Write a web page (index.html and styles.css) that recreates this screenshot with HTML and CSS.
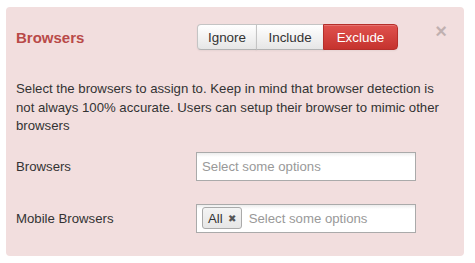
FILE: index.html
```html
<!DOCTYPE html>
<html lang="en">
<head>
    <meta charset="UTF-8">
    <meta name="viewport" content="width=device-width, initial-scale=1.0">
    <title>Browsers</title>
    <link rel="stylesheet" href="styles.css">
</head>
<body>
    <div class="rule-panel">
        <div class="rule-head">
            <h2 class="rule-title">Browsers</h2>
            <div class="btn-group">
                <button class="btn">Ignore</button>
                <button class="btn btn-include">Include</button>
                <button class="btn btn-danger">Exclude</button>
            </div>
            <button class="close">&times;</button>
        </div>

        <p class="rule-help">Select the browsers to assign to. Keep in mind that browser detection is not always 100% accurate. Users can setup their browser to mimic other browsers</p>

        <div class="field">
            <label class="field-label">Browsers</label>
            <div class="chosen">
                <span class="placeholder">Select some options</span>
            </div>
        </div>

        <div class="field">
            <label class="field-label">Mobile Browsers</label>
            <div class="chosen">
                <span class="choice">All <span class="choice-x">&#10006;</span></span>
                <span class="placeholder">Select some options</span>
            </div>
        </div>
    </div>
</body>
</html>
```

FILE: styles.css
```css
:root {
    --alert-bg: #f2dede;
    --alert-red: #b94a48;
    --text-color: #333;
}

body {
    margin: 0;
    padding: 7px 0 0 6px;
    background: #fff;
    font-family: "Liberation Sans", Arial, sans-serif;
    font-size: 13.2px;
    color: var(--text-color);
}

.rule-panel {
    width: 458px;
    box-sizing: border-box;
    background: var(--alert-bg);
    border-radius: 4px;
    padding: 17px 10px 23px 10px;
}

.rule-head {
    display: flex;
    align-items: center;
    height: 26px;
}

.rule-title {
    flex: 0 0 181px;
    margin: 0;
    font-size: 15px;
    font-weight: bold;
    color: var(--alert-red);
}

.btn-group {
    display: flex;
}

.btn {
    font-family: inherit;
    font-size: 13.4px;
    color: var(--text-color);
    height: 26px;
    padding: 0 10px;
    margin: 0;
    border: 1px solid #c4c4c4;
    border-bottom-color: #b3b3b3;
    background: linear-gradient(#ffffff, #e6e6e6);
    box-shadow: inset 0 1px 0 rgba(255, 255, 255, 0.2), 0 1px 2px rgba(0, 0, 0, 0.05);
    cursor: pointer;
}

.btn + .btn {
    margin-left: -1px;
}

.btn:first-child {
    border-radius: 4px 0 0 4px;
}

.btn:last-child {
    border-radius: 0 4px 4px 0;
}

.btn-include {
    padding: 0 11.5px;
}

.btn-danger {
    color: #fff;
    background: linear-gradient(#e0524e, #c5332e);
    border-color: #b52f2b;
    padding: 0 12.5px;
}

.close {
    align-self: flex-start;
    margin: -3px 7px 0 auto;
    padding: 0;
    border: none;
    background: none;
    font-family: inherit;
    font-size: 20px;
    font-weight: bold;
    line-height: 20px;
    color: #000;
    opacity: 0.2;
    cursor: pointer;
}

.rule-help {
    margin: 30px 0 16px 0;
    line-height: 18.5px;
}

.field {
    display: flex;
    align-items: center;
    margin-bottom: 23px;
}

.field:last-child {
    margin-bottom: 0;
}

.field-label {
    flex: 0 0 180px;
}

.chosen {
    width: 220px;
    height: 29px;
    box-sizing: border-box;
    display: flex;
    align-items: center;
    gap: 7px;
    padding: 0 5px;
    background: linear-gradient(#eee 1%, #fff 15%);
    border: 1px solid #aaa;
}

.placeholder {
    color: #999;
}

.choice {
    display: inline-flex;
    align-items: center;
    gap: 5px;
    height: 22px;
    box-sizing: border-box;
    padding: 0 5px;
    border: 1px solid #aaa;
    border-radius: 3px;
    background: linear-gradient(#f4f4f4, #e6e6e6);
    color: var(--text-color);
}

.choice-x {
    font-size: 10px;
    color: #555;
}
```
